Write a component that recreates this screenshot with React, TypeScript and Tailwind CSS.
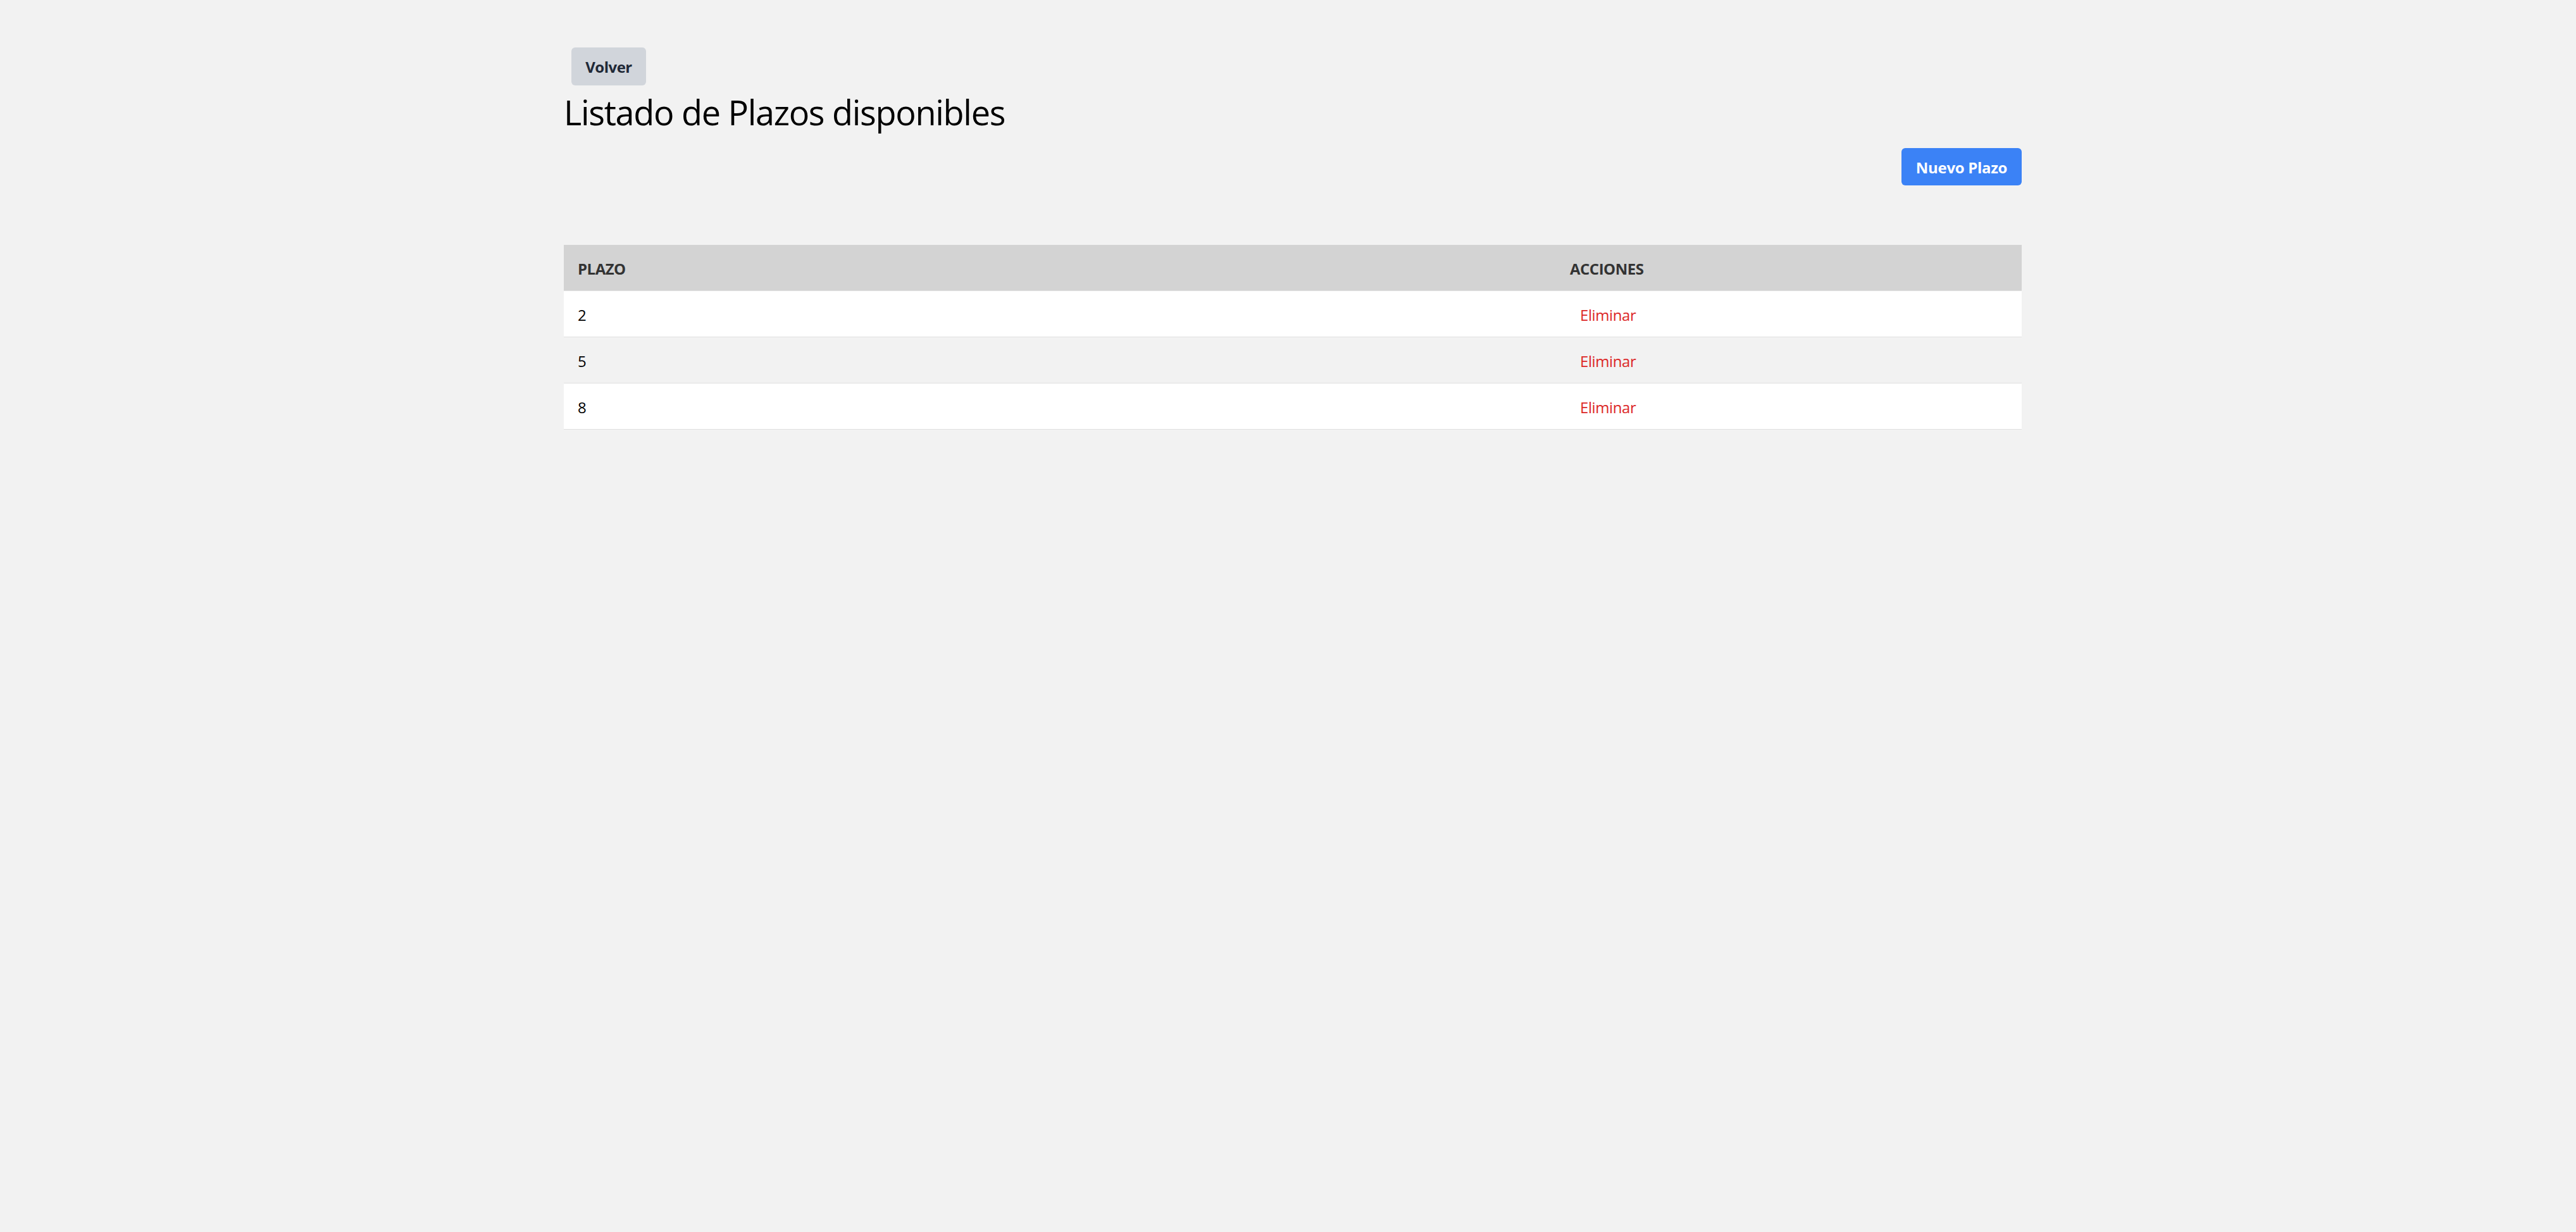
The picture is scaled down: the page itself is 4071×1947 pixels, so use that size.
const plazos = [2, 5, 8]

export default function App() {
    return (
        <div className="min-h-screen w-full bg-[#f2f2f2] pl-[15px] font-['Open_Sans',sans-serif]">
            <div className="mx-auto w-[2304px] pt-[75px]">
                <button className="ml-[12px] h-[60px] w-[118px] rounded-[6px] bg-[#d1d5db] pt-[2px] text-[24px] font-bold tracking-[-0.5px] text-[#1f2937]">
                    Volver
                </button>
                <h1 className="mt-[12px] text-[54px] leading-[60px] font-normal tracking-[-1.3px] text-black">Listado de Plazos disponibles</h1>
                <div className="mt-[27px] flex justify-end">
                    <button className="h-[59px] w-[190px] rounded-[6px] bg-[#3b82f6] pt-[2px] text-[24px] font-bold tracking-[-0.3px] text-white">
                        Nuevo Plazo
                    </button>
                </div>
                <table className="mt-[94px] w-full border-collapse text-left">
                    <thead>
                        <tr className="h-[72px] border-b border-[#e0e0e0] bg-[#d3d3d3]">
                            <th className="w-[1568px] px-[22px] pt-[4px] text-[24px] font-bold tracking-[-0.5px] text-[#333333]">PLAZO</th>
                            <th className="px-[22px] pt-[4px] text-[24px] font-bold tracking-[-0.5px] text-[#333333]">ACCIONES</th>
                        </tr>
                    </thead>
                    <tbody>
                        {plazos.map((p, i) => (
                            <tr key={p} className={`h-[73px] border-b border-[#e0e0e0] ${i % 2 === 1 ? 'bg-[#f2f2f2]' : 'bg-white'}`}>
                                <td className="px-[22px] pt-[4px] text-[24px] text-black">{p}</td>
                                <td className="px-[22px] pt-[4px]">
                                    <button className="px-[16px] text-[24px] tracking-[-0.4px] text-[#dc2626]">Eliminar</button>
                                </td>
                            </tr>
                        ))}
                    </tbody>
                </table>
            </div>
        </div>
    )
}
